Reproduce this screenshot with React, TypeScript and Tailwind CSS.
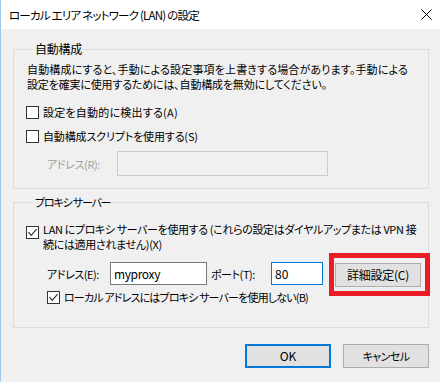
import React from "react";

function Check({ checked }: { checked?: boolean }) {
  return (
    <span className="w-[13px] h-[13px] border border-[#333333] bg-white flex items-center justify-center shrink-0">
      {checked && (
        <svg width="11" height="11" viewBox="0 0 11 11">
          <path d="M1.5 5.2 L4.2 8.3 L9.6 2.2" stroke="#333333" strokeWidth="1.2" fill="none" />
        </svg>
      )}
    </span>
  );
}

export default function App() {
  return (
    <div className="relative w-[440px] h-[382px] overflow-hidden bg-[#f0f0f0] border-l border-[#9cc8ef] flex flex-col text-[11px] text-black font-['Noto_Sans_CJK_JP',sans-serif] [font-feature-settings:'palt']">
      <div className="h-[29px] bg-white flex items-center pl-[8px] shrink-0">
        <span className="text-[11.5px] leading-[16px] tracking-[-0.79px] whitespace-nowrap">ローカル エリア ネットワーク (LAN) の設定</span>
        <svg className="ml-auto mr-[8px]" width="11" height="11" viewBox="0 0 11 11">
          <path d="M0.5 0.5 L10.5 10.5 M10.5 0.5 L0.5 10.5" stroke="#000" strokeWidth="1" fill="none" />
        </svg>
      </div>
      <div className="flex flex-col pl-[12px] pr-[11px]">
        <fieldset className="mt-[12px] border border-[#dcdcdc] pl-[12px] pb-[12px]">
          <legend className="ml-[7px] px-[2px] leading-[16px] text-[12px] tracking-[-0.25px]">自動構成</legend>
          <div className="mt-[5px] pl-[1px] leading-[15px] whitespace-nowrap">
            <div className="tracking-[0.15px]">自動構成にすると、手動による設定事項を上書きする場合があります。手動による</div>
            <div className="tracking-[-0.17px]">設定を確実に使用するためには、自動構成を無効にしてください。</div>
          </div>
          <div className="mt-[12px] h-[16px] flex items-center gap-[4px]">
            <Check />
            <span className="leading-[16px] whitespace-nowrap tracking-[0.23px]">設定を自動的に検出する(A)</span>
          </div>
          <div className="mt-[8px] h-[16px] flex items-center gap-[4px]">
            <Check />
            <span className="leading-[16px] whitespace-nowrap tracking-[-0.14px]">自動構成スクリプトを使用する(S)</span>
          </div>
          <div className="mt-[7px] flex items-center">
            <span className="ml-[21px] w-[70px] text-[#a0a0a0] leading-[16px] whitespace-nowrap tracking-[-0.37px]">アドレス(R):</span>
            <div className="w-[211px] h-[25px] border border-[#cccccc] bg-[#f0f0f0]" />
          </div>
        </fieldset>

        <fieldset className="mt-[5px] border border-[#dcdcdc] pl-[12px] pb-[22px]">
          <legend className="ml-[7px] px-[2px] leading-[16px] whitespace-nowrap tracking-[-1.2px]">プロキシ サーバー</legend>
          <div className="mt-[12px] flex items-start gap-[4px]">
            <span className="mt-[4px]">
              <Check checked />
            </span>
            <div className="leading-[15px] whitespace-nowrap">
              <div className="tracking-[-0.37px]">LAN にプロキシ サーバーを使用する (これらの設定はダイヤルアップまたは VPN 接</div>
              <div className="tracking-[-0.33px]">続には適用されません)(X)</div>
            </div>
          </div>
          <div className="mt-[10px] flex items-start">
            <span className="ml-[21px] w-[63px] h-[23px] flex items-center leading-[16px] whitespace-nowrap tracking-[-0.44px]">アドレス(E):</span>
            <div className="w-[97px] h-[23px] border border-[#7a7a7a] bg-white flex items-center pl-[3px] leading-[16px] text-[12px] tracking-[-0.37px]">
              myproxy
            </div>
            <span className="ml-[4px] w-[60px] h-[23px] flex items-center leading-[16px] whitespace-nowrap tracking-[-0.43px]">ポート(T):</span>
            <div className="w-[52px] h-[23px] border border-[#0078d7] bg-white flex items-center pl-[3px] leading-[16px] text-[12px]">
              80
            </div>
            <button className="ml-[12px] mt-[1px] w-[86px] h-[24px] border border-[#adadad] bg-[#e1e1e1] flex items-center justify-center leading-[16px] text-[12px] tracking-[-0.25px]">
              詳細設定(C)
            </button>
          </div>
          <div className="mt-[2px] h-[16px] flex items-center gap-[4px] ml-[21px]">
            <Check checked />
            <span className="leading-[16px] whitespace-nowrap tracking-[-0.83px]">ローカル アドレスにはプロキシ サーバーを使用しない(B)</span>
          </div>
        </fieldset>

        <div className="mt-[16px] flex justify-end gap-[12px]">
          <button className="w-[86px] h-[24px] border-2 border-[#0078d7] bg-[#e1e1e1] flex items-center justify-center leading-[16px] text-[12px]">
            OK
          </button>
          <button className="w-[86px] h-[24px] border border-[#adadad] bg-[#e1e1e1] flex items-center justify-center leading-[16px] tracking-[-0.58px]">
            キャンセル
          </button>
        </div>
      </div>
      <div className="absolute left-[328px] top-[253px] w-[101px] h-[43px] border-[5px] border-[#ed1c24]" />
    </div>
  );
}
